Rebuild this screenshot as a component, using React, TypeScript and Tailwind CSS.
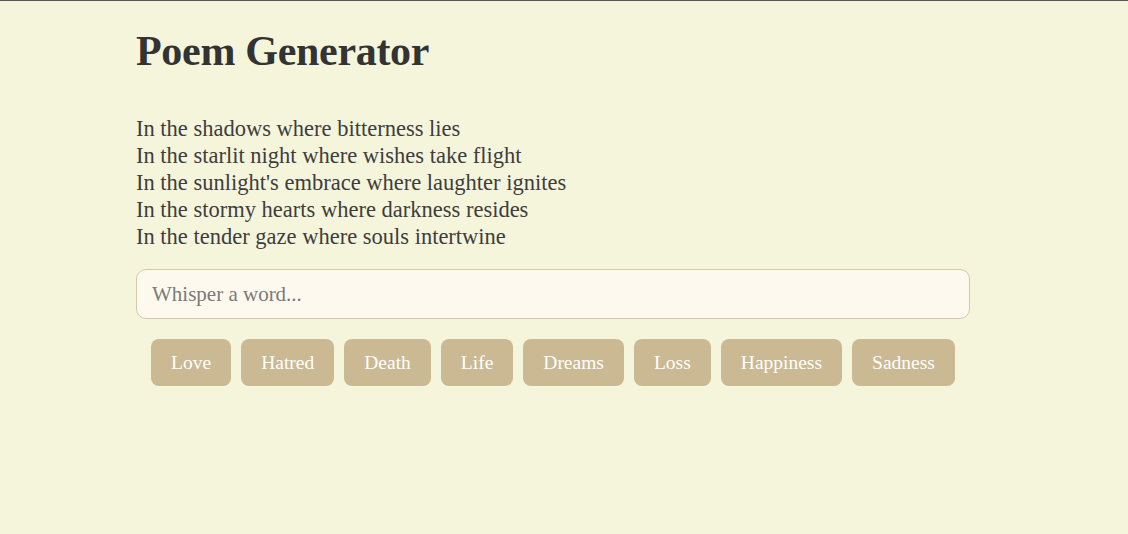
import { useState } from "react"

const poem = [
  "In the shadows where bitterness lies",
  "In the starlit night where wishes take flight",
  "In the sunlight's embrace where laughter ignites",
  "In the stormy hearts where darkness resides",
  "In the tender gaze where souls intertwine",
]

const themes = ["Love", "Hatred", "Death", "Life", "Dreams", "Loss", "Happiness", "Sadness"]

export default function App() {
  const [word, setWord] = useState("")

  return (
    <div className="min-h-[534px] bg-[#f5f5dc] border-t border-[#555] font-['Liberation_Serif',serif] text-[#333]">
      <div className="ml-[136px] w-[834px] pt-[24px]">
        <h1 className="text-[42px] font-bold leading-[52px] tracking-[-0.3px]">Poem Generator</h1>

        <div className="mt-[38px] text-[22.5px] leading-[27px] text-[#3d3d3d]">
          {poem.map((line) => (
            <p key={line}>{line}</p>
          ))}
        </div>

        <input
          value={word}
          onChange={(e) => setWord(e.target.value)}
          placeholder="Whisper a word..."
          className="mt-[19px] w-full h-[50px] rounded-[10px] border border-[#d6c8a6] bg-[#fdf9ee] px-[15px] text-[21px] text-[#333] placeholder:text-[#7a7a7a] outline-none"
        />

        <div className="mt-[20px] flex flex-wrap justify-center gap-[10px]">
          {themes.map((t) => (
            <button
              key={t}
              onClick={() => setWord(t)}
              className="h-[47px] px-[20px] rounded-[8px] bg-[#cbb994] text-white text-[19.5px]"
            >
              {t}
            </button>
          ))}
        </div>
      </div>
    </div>
  )
}
